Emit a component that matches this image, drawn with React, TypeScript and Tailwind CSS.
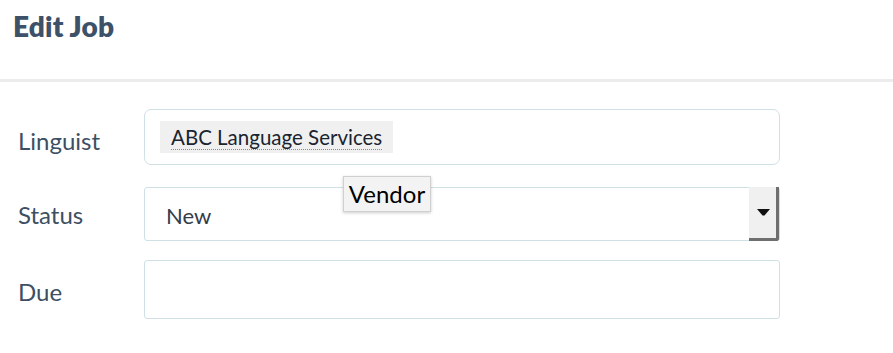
import React from "react"

const font = { fontFamily: "Lato, 'Open Sans', sans-serif" }

export default function App() {
    return (
        <div className="w-[893px] h-[353px] bg-white relative overflow-hidden" style={font}>
            {/* Header */}
            <div className="h-[79px] px-[13px] pt-[8px]">
                <h1 className="text-[28px] font-extrabold text-[#3d5169] leading-[36px] tracking-[0.2px]">Edit Job</h1>
            </div>
            <div className="h-[3px] bg-[#ececec]" />

            {/* Form */}
            <div className="flex flex-col pt-[27px]">
                <div className="flex items-center h-[56px]">
                    <label className="w-[144px] pl-[18px] pt-[8px] text-[24px] text-[#3d4f63]">Linguist</label>
                    <div className="w-[636px] h-[56px] border border-[#cfe0e6] rounded-[7px] flex items-center px-[15px]">
                        <span className="bg-[#f0f0f0] h-[32px] px-[11px] flex items-center">
                            <span className="text-[20.5px] text-[#1a2430] border-b border-dotted border-[#8a8a8a] leading-[23px] pt-[2px]">
                                ABC Language Services
                            </span>
                        </span>
                    </div>
                </div>

                <div className="flex items-center h-[54px] mt-[22px]">
                    <label className="w-[144px] pl-[18px] pt-[2px] text-[24px] text-[#3d4f63]">Status</label>
                    <div className="w-[636px] h-[54px] border border-[#cfe0e6] rounded-[3px] flex items-center">
                        <span className="flex-1 pl-[21px] pt-[2px] text-[22px] text-[#333d4a]">New</span>
                        <div className="w-[30px] h-[54px] bg-[#f0f0f0] border-r-[3px] border-b-[3px] border-[#6f6f6f] rounded-br-[3px] flex items-center justify-center pl-[1px]">
                            <svg width="13" height="7" viewBox="0 0 13 7">
                                <path d="M0 0 L13 0 L7.5 6.5 L5.5 6.5 Z" fill="#111" />
                            </svg>
                        </div>
                    </div>
                </div>

                <div className="flex items-center h-[59px] mt-[19px]">
                    <label className="w-[144px] pl-[18px] pt-[4px] text-[24px] text-[#3d4f63]">Due</label>
                    <div className="w-[636px] h-[59px] border border-[#cfe0e6] rounded-[3px]" />
                </div>
            </div>

            {/* Tooltip */}
            <div className="absolute left-[343px] top-[176px] h-[36px] w-[88px] flex items-center justify-center bg-[#f3f3f3] border border-[#d0d0d0] shadow-[0_1px_3px_rgba(0,0,0,0.2)] text-[24px] text-black">
                Vendor
            </div>
        </div>
    )
}
